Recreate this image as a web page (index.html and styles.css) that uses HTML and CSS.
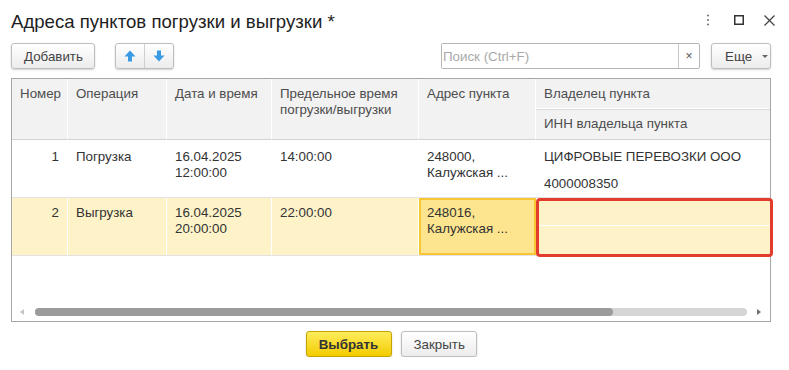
FILE: index.html
```html
<!DOCTYPE html>
<html>
  <head>
    <meta charset="utf-8" />
    <title>Адреса пунктов погрузки и выгрузки</title>
    <link rel="stylesheet" href="styles.css">
  </head>
  <body>
    <div class="window">
      <div class="titlebar">
        <h1>Адреса пунктов погрузки и выгрузки *</h1>
        <div class="win-controls">
          <span class="win-btn">
            <svg width="4" height="12" viewBox="0 0 4 12"><circle cx="2" cy="1.5" r="1.1" fill="#7a7a7a"/><circle cx="2" cy="6" r="1.1" fill="#7a7a7a"/><circle cx="2" cy="10.5" r="1.1" fill="#7a7a7a"/></svg>
          </span>
          <span class="win-btn">
            <svg width="10" height="10" viewBox="0 0 10 10"><rect x="0.75" y="0.75" width="8.5" height="8.5" fill="none" stroke="#333" stroke-width="1.5"/></svg>
          </span>
          <span class="win-btn">
            <svg width="11" height="11" viewBox="0 0 11 11"><path d="M0.5 0.5 L10.5 10.5 M10.5 0.5 L0.5 10.5" stroke="#444" stroke-width="1.3"/></svg>
          </span>
        </div>
      </div>

      <div class="toolbar">
        <button class="btn btn-add">Добавить</button>
        <div class="btn-pair">
          <button class="pair-half">
            <svg width="12" height="12" viewBox="0 0 12 12"><path d="M6 0.5 L11.5 6.5 H8 V11.5 H4 V6.5 H0.5 Z" fill="#3a9ae4"/></svg>
          </button>
          <button class="pair-half">
            <svg width="12" height="12" viewBox="0 0 12 12"><path d="M6 11.5 L11.5 5.5 H8 V0.5 H4 V5.5 H0.5 Z" fill="#3a9ae4"/></svg>
          </button>
        </div>
        <div class="search">
          <input type="text" placeholder="Поиск (Ctrl+F)" />
          <span class="search-clear">×</span>
        </div>
        <button class="btn btn-more">Еще <span class="caret"></span></button>
      </div>

      <div class="grid">
        <div class="grid-head">
          <div class="hcell span">Номер</div>
          <div class="hcell span">Операция</div>
          <div class="hcell span">Дата и время</div>
          <div class="hcell span">Предельное время погрузки/выгрузки</div>
          <div class="hcell span">Адрес пункта</div>
          <div class="hcell owner-top">Владелец пункта</div>
          <div class="hcell owner-bottom">ИНН владельца пункта</div>
        </div>

        <div class="grid-row">
          <div class="cell cell-num">1</div>
          <div class="cell">Погрузка</div>
          <div class="cell">16.04.2025<br>12:00:00</div>
          <div class="cell">14:00:00</div>
          <div class="cell">248000,<br>Калужская ...</div>
          <div class="cell cell-owner">
            <div class="owner-line">ЦИФРОВЫЕ ПЕРЕВОЗКИ ООО</div>
            <div class="owner-line">4000008350</div>
          </div>
        </div>

        <div class="grid-row selected">
          <div class="cell cell-num">2</div>
          <div class="cell">Выгрузка</div>
          <div class="cell">16.04.2025<br>20:00:00</div>
          <div class="cell">22:00:00</div>
          <div class="cell cell-current">248016,<br>Калужская ...</div>
          <div class="cell cell-owner cell-error">
            <div class="owner-line"></div>
            <div class="owner-line"></div>
          </div>
        </div>

        <div class="grid-fill"></div>

        <div class="hscroll">
          <span class="arrow-left"></span>
          <div class="track"><div class="thumb"></div></div>
          <span class="arrow-right"></span>
        </div>
      </div>

      <div class="footer">
        <button class="btn btn-primary">Выбрать</button>
        <button class="btn btn-close">Закрыть</button>
      </div>
    </div>
  </body>
</html>
```

FILE: styles.css
```css
body {
  margin: 0;
  font-family: "Liberation Sans", Arial, sans-serif;
  font-size: 13.33px;
  color: #333;
  background: #fff;
}
.window {
  width: 789px;
}
.titlebar {
  display: flex;
  align-items: flex-start;
  height: 43px;
  padding: 11px 4px 0 11px;
  box-sizing: border-box;
}
.titlebar h1 {
  flex: 1;
  margin: 0;
  font-size: 18.6px;
  font-weight: normal;
  line-height: 22px;
  color: #1e1e1e;
}
.win-controls {
  display: flex;
  margin-top: 3px;
}
.win-btn {
  display: flex;
  align-items: center;
  justify-content: center;
  width: 31px;
  height: 12px;
}
.toolbar {
  display: flex;
  height: 26px;
  padding: 0 18px 0 11px;
}
.btn {
  height: 26px;
  box-sizing: border-box;
  padding: 0 12px;
  font-family: "Liberation Sans", Arial, sans-serif;
  font-size: 13.33px;
  color: #444;
  border: 1px solid #bdbdbd;
  border-radius: 3px;
  background: linear-gradient(#ffffff, #ececec);
  box-shadow: 0 1px 2px rgba(0, 0, 0, 0.18);
}
.btn-add {
  width: 84px;
}
.btn-pair {
  display: flex;
  margin-left: 20px;
  width: 59px;
  border: 1px solid #bdbdbd;
  border-radius: 3px;
  box-sizing: border-box;
  background: linear-gradient(#ffffff, #ececec);
  box-shadow: 0 1px 2px rgba(0, 0, 0, 0.18);
}
.pair-half {
  flex: 1;
  display: flex;
  align-items: center;
  justify-content: center;
  padding: 0;
  border: none;
  background: none;
}
.pair-half + .pair-half {
  border-left: 1px solid #cfcfcf;
}
.search {
  display: flex;
  margin-left: auto;
  width: 259px;
  border: 1px solid #b6b6b6;
  border-radius: 2px;
  box-sizing: border-box;
  background: #fff;
}
.search input {
  flex: 1;
  min-width: 0;
  border: none;
  outline: none;
  padding: 0 1px;
  font-family: "Liberation Sans", Arial, sans-serif;
  font-size: 13.33px;
  color: #333;
}
.search input::placeholder {
  color: #a9a9a9;
}
.search-clear {
  width: 20px;
  display: flex;
  align-items: center;
  justify-content: center;
  border-left: 1px solid #c8c8c8;
  font-size: 12px;
  color: #555;
}
.btn-more {
  margin-left: 11px;
  width: 60px;
  padding: 0 0 0 13px;
  text-align: left;
}
.caret {
  display: inline-block;
  margin-left: 6px;
  vertical-align: middle;
  border-left: 3px solid transparent;
  border-right: 3px solid transparent;
  border-top: 3px solid #666;
}

/* table */
.grid {
  display: flex;
  flex-direction: column;
  height: 244px;
  margin: 9px 18px 0 11px;
  border: 1px solid #a6a6a6;
  box-sizing: border-box;
}
.grid-head,
.grid-row {
  display: grid;
  grid-template-columns: 56px 99px 105px 147px 117px 1fr;
}
.grid-head {
  grid-template-rows: 30px 31px;
  background: #f2f2f2;
}
.hcell {
  box-sizing: border-box;
  padding: 7px 8px 0 8px;
  line-height: 16px;
  color: #4d4d4d;
  border-right: 1px solid #fff;
}
.hcell.span {
  grid-row: span 2;
  border-bottom: 1px solid #d2d2d2;
}
.owner-top {
  grid-column: 6;
  grid-row: 1;
  border-right: none;
  border-bottom: 1px solid #fff;
}
.owner-bottom {
  grid-column: 6;
  grid-row: 2;
  border-right: none;
  border-top: 1px solid #dadada;
  border-bottom: 1px solid #d2d2d2;
  padding-top: 6px;
}
.grid-row {
  height: 58px;
  border-bottom: 1px solid #e3e3e3;
  box-sizing: border-box;
}
.cell {
  box-sizing: border-box;
  padding: 9px 8px 0 8px;
  line-height: 16px;
  border-right: 1px solid #fff;
}
.cell-num {
  text-align: right;
}
.cell-owner {
  display: flex;
  flex-direction: column;
  padding: 0;
  border-right: none;
}
.owner-line {
  height: 27px;
  box-sizing: border-box;
  padding: 9px 8px 0 8px;
}
.selected .cell {
  background: #fdf2c8;
  padding-top: 7px;
}
.selected .cell-current {
  background: #fde48e;
  border: 2px solid #f7c733;
  padding: 5px 6px 0 6px;
}
.selected .cell-error {
  position: relative;
  z-index: 1;
  margin: 0 -3px -2px 0;
  padding: 0;
  border: 3px solid #e23c2d;
  border-radius: 4px;
}
.cell-error .owner-line {
  height: 25px;
  border-bottom: 1px solid #fff;
}
.cell-error .owner-line + .owner-line {
  border-bottom: none;
}
.grid-fill {
  flex: 1;
}
.hscroll {
  display: flex;
  align-items: center;
  height: 17px;
  padding: 0 0 2px 8px;
  box-sizing: border-box;
}
.arrow-left {
  width: 0;
  height: 0;
  border-top: 3px solid transparent;
  border-bottom: 3px solid transparent;
  border-right: 4px solid #c4c4c4;
  margin-right: 11px;
}
.track {
  width: 712px;
  height: 8px;
  border-radius: 4px;
  background: #d5d5d5;
}
.thumb {
  width: 578px;
  height: 8px;
  border-radius: 4px;
  background: #9b9b9b;
}
.arrow-right {
  width: 0;
  height: 0;
  border-top: 3px solid transparent;
  border-bottom: 3px solid transparent;
  border-left: 4px solid #6f6f6f;
  margin-left: 10px;
}
.footer {
  display: flex;
  justify-content: center;
  gap: 9px;
  margin: 9px 18px 0 11px;
}
.btn-primary {
  width: 86px;
  font-weight: bold;
  color: #333;
  border-color: #c6a400;
  background: linear-gradient(#ffec5c, #f2cc00);
}
.btn-close {
  width: 76px;
}
```
